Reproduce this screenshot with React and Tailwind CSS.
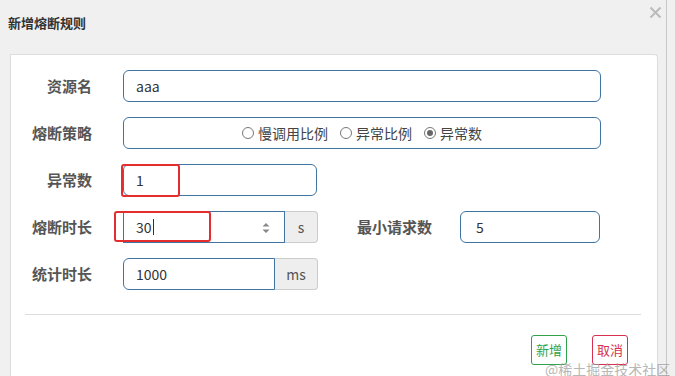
import React from "react";

const font = { fontFamily: '"Noto Sans CJK SC", "Liberation Sans", sans-serif' };

function Label({ children, className = "" }) {
  return (
    <div className={`w-[72px] shrink-0 text-right text-[15px] font-bold text-[#555] ${className}`}>
      {children}
    </div>
  );
}

function Radio({ checked, label }) {
  return (
    <span className="flex items-center gap-[4px]">
      <span className="flex h-[12px] w-[12px] items-center justify-center rounded-full border border-[#777] bg-white">
        {checked && <span className="h-[6px] w-[6px] rounded-full bg-[#666]" />}
      </span>
      <span>{label}</span>
    </span>
  );
}

export default function App() {
  return (
    <div
      className="flex h-[376px] w-[675px] overflow-hidden bg-[#f0f0f0] text-[#333] relative"
      style={font}
    >
      <div className="flex flex-1 flex-col pl-[10px] pr-[8px]">
        {/* Header */}
        <div className="flex h-[54px] shrink-0 items-start justify-between">
          <h4 className="mt-[13px] -ml-[2px] text-[13px] font-bold text-[#333]">新增熔断规则</h4>
          <svg className="mt-[6px] mr-[-4px]" width="13" height="13" viewBox="0 0 13 13">
            <path d="M1.5 1.5 L11.5 11.5 M11.5 1.5 L1.5 11.5" stroke="#bbb" strokeWidth="2" />
          </svg>
        </div>

        {/* Card */}
        <div className="flex-1 rounded-tr-[4px] border border-b-0 border-[#ddd] bg-white">
          <div className="flex flex-col gap-[15px] pt-[15px] pl-[9px]">
            <div className="flex h-[32px] items-center gap-[31px]">
              <Label>资源名</Label>
              <div className="flex h-[32px] w-[478px] items-center rounded-[6px] border border-[#3f74a3] px-[12px] text-[14px]">
                aaa
              </div>
            </div>

            <div className="flex h-[32px] items-center gap-[31px]">
              <Label>熔断策略</Label>
              <div className="flex h-[32px] w-[478px] items-center justify-center gap-[12px] rounded-[6px] border border-[#3f74a3] text-[14px] text-[#444]">
                <Radio label="慢调用比例" />
                <Radio label="异常比例" />
                <Radio checked label="异常数" />
              </div>
            </div>

            <div className="flex h-[32px] items-center gap-[31px]">
              <Label>异常数</Label>
              <div className="relative flex h-[32px] w-[194px] items-center rounded-[6px] border border-[#3f74a3] px-[12px] text-[14px]">
                1
                <span className="absolute -left-[3px] -top-[1px] h-[33px] w-[59px] rounded-[3px] border-2 border-[#e52d2d]" />
              </div>
            </div>

            <div className="flex h-[32px] items-center gap-[31px]">
              <Label>熔断时长</Label>
              <div className="flex h-[32px] items-center">
                <div className="relative flex h-[32px] w-[162px] items-center border border-[#3f74a3] px-[12px] text-[14px]">
                  30
                  <span className="ml-[1px] h-[16px] w-px bg-[#333]" />
                  <svg className="absolute right-[14px] top-[11px]" width="8" height="10" viewBox="0 0 8 10">
                    <path d="M4 0 L7.5 3.5 H0.5 Z M4 10 L7.5 6.5 H0.5 Z" fill="#888" />
                  </svg>
                  <span className="absolute -left-[10px] -top-[1px] h-[31px] w-[97px] rounded-[3px] border-2 border-[#e52d2d]" />
                </div>
                <div className="flex h-[32px] w-[33px] items-center justify-center rounded-r-[4px] border border-l-0 border-[#ccc] bg-[#eee] text-[14px] text-[#555]">
                  s
                </div>
              </div>
              <div className="ml-[8px] text-[15px] font-bold text-[#555]">最小请求数</div>
              <div className="ml-[-3px] flex h-[32px] w-[140px] items-center rounded-[6px] border border-[#3f74a3] px-[15px] text-[14px]">
                5
              </div>
            </div>

            <div className="flex h-[32px] items-center gap-[31px]">
              <Label>统计时长</Label>
              <div className="flex h-[32px] items-center">
                <div className="flex h-[32px] w-[152px] items-center rounded-l-[6px] border border-[#3f74a3] px-[12px] text-[14px]">
                  1000
                </div>
                <div className="flex h-[32px] w-[43px] items-center justify-center rounded-r-[4px] border border-l-0 border-[#ccc] bg-[#eee] text-[14px] text-[#555]">
                  ms
                </div>
              </div>
            </div>
          </div>

          <div className="mt-[24px] ml-[14px] mr-[16px] border-t border-[#ddd]" />

          <div className="mt-[20px] mr-[29px] flex justify-end gap-[25px]">
            <button className="flex h-[30px] w-[36px] items-center justify-center rounded-[3px] border border-[#2fa24a] text-[13px] text-[#2fa24a]">
              新增
            </button>
            <button className="flex h-[30px] w-[36px] items-center justify-center rounded-[3px] border border-[#d9304f] text-[13px] text-[#d9304f]">
              取消
            </button>
          </div>
        </div>
      </div>

      <div className="w-[9px] shrink-0 border-l border-[#c8c8c8] bg-[#f0f0f0]" />

      <span className="absolute left-[545px] top-[360px] text-[14px] leading-[18px] text-[#999] opacity-70">
        @稀土掘金技术社区
      </span>
    </div>
  );
}
